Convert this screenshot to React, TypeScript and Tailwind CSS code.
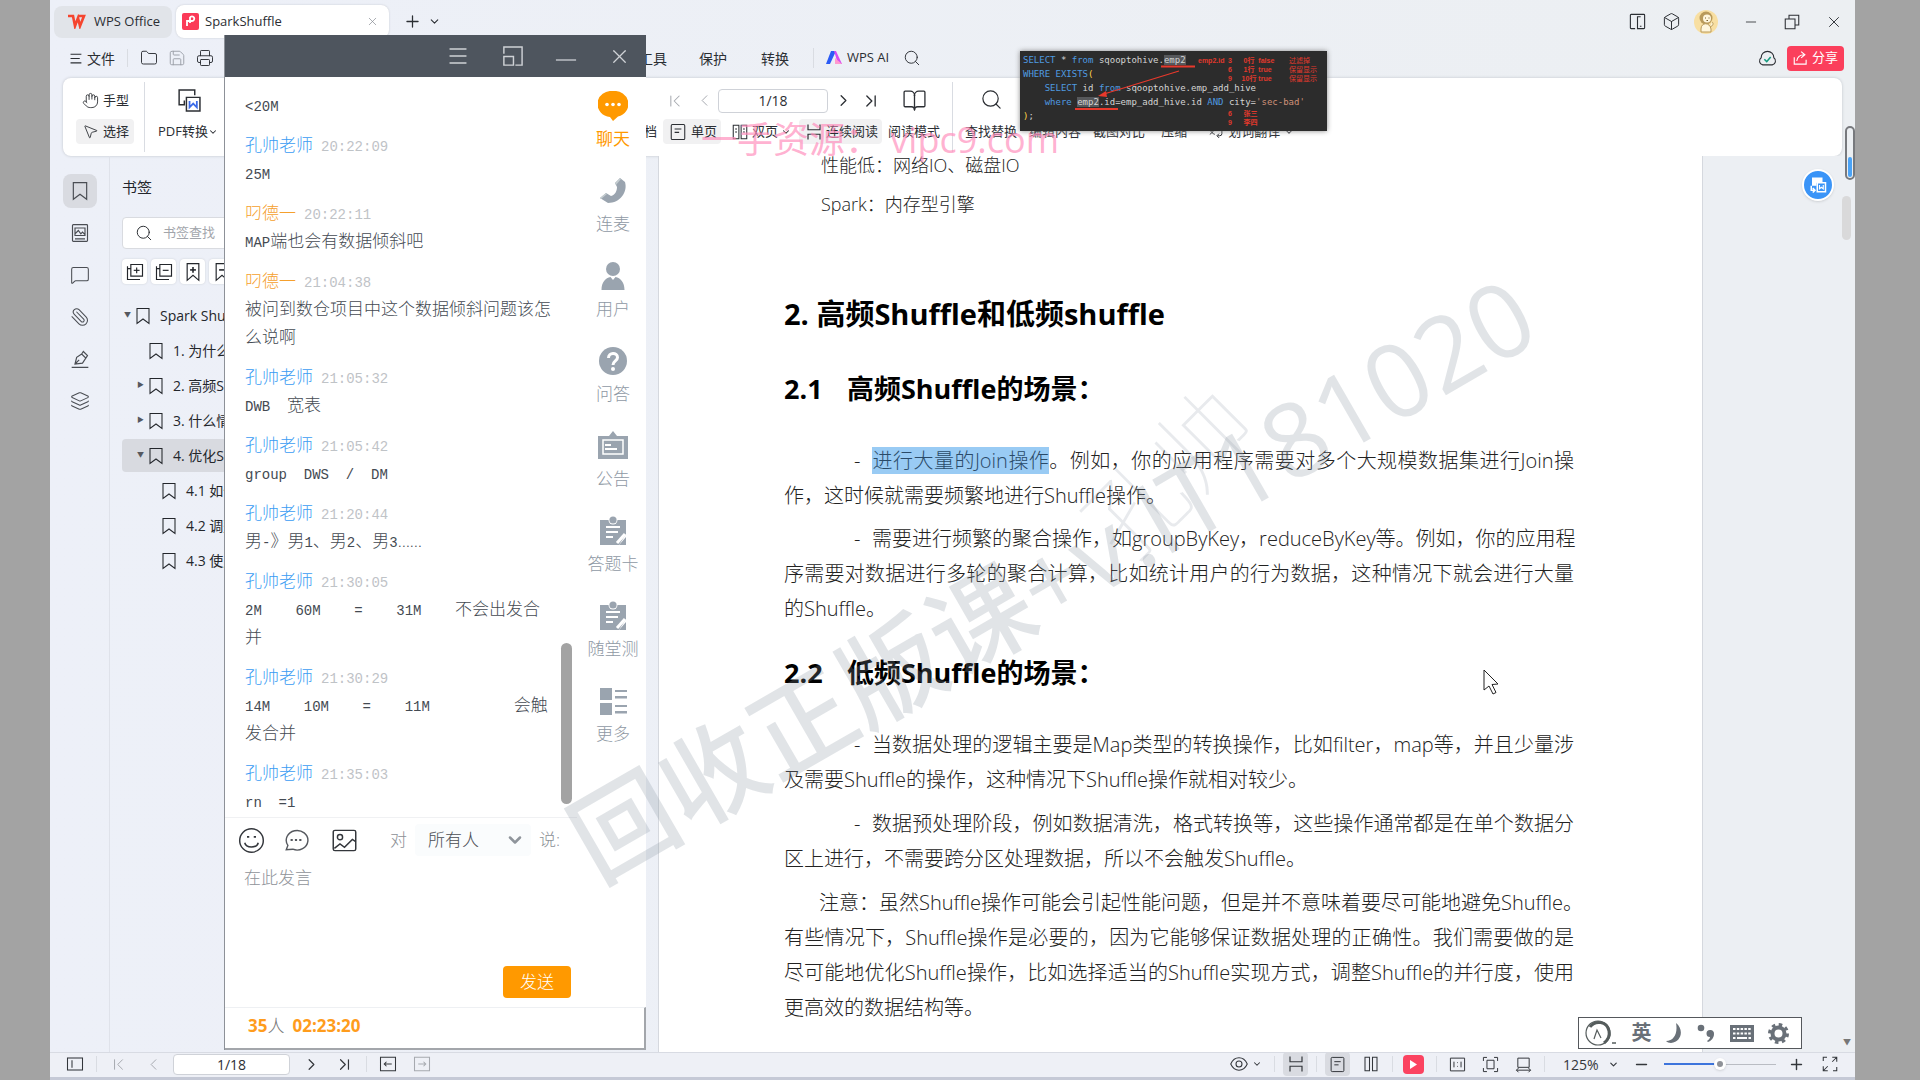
import React from 'react';
import type { ReactNode } from 'react';
import {
  Bookmark,
  Box,
  BookOpen,
  ChevronDown,
  ChevronFirst,
  ChevronLast,
  ChevronLeft,
  ChevronRight,
  Folder,
  Hand,
  Layers,
  Menu,
  MessageSquare,
  Minus,
  MousePointer2,
  Paperclip,
  Plus,
  Printer,
  Save,
  Search,
  X,
} from 'lucide-react';

const THIN = 1.25;

function Svg({ size = 20, className = '', children, sw = 1.4 }: { size?: number; className?: string; children: ReactNode; sw?: number }) {
  return (
    <svg width={size} height={size} viewBox="0 0 24 24" fill="none" stroke="currentColor" strokeWidth={sw} className={'shrink-0 ' + className}>
      {children}
    </svg>
  );
}

function Divider({ className = '' }: { className?: string }) {
  return <span className={'w-px shrink-0 bg-[#d9dce2] ' + className} />;
}

/* ---------- icons ---------- */

const SinglePage = ({ size = 19 }) => (
  <Svg size={size}>
    <rect x="3" y="2" width="18" height="20" rx="1.5" />
    <path d="M7.5 8h9M7.5 12.5h6" />
  </Svg>
);
const DoublePage = ({ size = 19 }) => (
  <Svg size={size}>
    <path d="M3 3h7.5v18H3zM13.5 3H21v18h-7.500zM5.500 8H8M5.500 12H8M16 8h2.500M16 12h2.500" />
  </Svg>
);
const Continuous = ({ size = 19 }) => (
  <Svg size={size} sw={1.6}>
    <path d="M4 2v7h16V2M4 22v-7h16v7" />
  </Svg>
);
const Clipboard = () => (
  <svg width="30" height="30" viewBox="0 0 30 30" fill="#9aa4af">
    <path d="M2 4h26v14l-7 11H2z" />
    <circle cx="15" cy="4" r="4.500" fill="#fff" />
    <circle cx="15" cy="4" r="3.600" />
    <path d="M28 21v8h-7z" />
    <path d="M8 11h14M8 16h12M8 21h7" stroke="#fff" strokeWidth="1.800" />
    <path d="M19 27l8-9" stroke="#fff" strokeWidth="3" />
  </svg>
);

const railIcons: { label: string; icon: ReactNode; active?: boolean }[] = [
  {
    label: '聊天',
    active: true,
    icon: (
      <svg width="30" height="30" viewBox="0 0 30 30">
        <path d="M15 0a14 13 0 0 1 5 25.500L15 30l-3-4A14 13 0 0 1 15 0z" fill="#ff9900" />
        <g fill="#fff">
          <circle cx="9" cy="13.500" r="1.800" />
          <circle cx="15" cy="13.500" r="1.800" />
          <circle cx="21" cy="13.500" r="1.800" />
        </g>
      </svg>
    ),
  },
  {
    label: '连麦',
    icon: (
      <svg width="30" height="30" viewBox="0 0 30 30">
        <path d="M22 2l5 4c3 10-5 21-17 21l-8-5 6-5 5 3c4-1 6-5 6-9l-2-4z" fill="#9aa4af" />
        <path d="M22 2l-5 5 1 2 5-6zM2 22l6-5 1 1-6 5z" fill="#c4cdd0" />
      </svg>
    ),
  },
  {
    label: '用户',
    icon: (
      <svg width="30" height="30" viewBox="0 0 30 30" fill="#9aa4af">
        <circle cx="15" cy="8" r="7" />
        <path d="M3.500 29c0-8 4-12 9-13l2.500 3 2.500-3c5 1 9 5 9 13z" />
      </svg>
    ),
  },
  {
    label: '问答',
    icon: (
      <svg width="30" height="30" viewBox="0 0 30 30" fill="none">
        <circle cx="15" cy="15" r="14" fill="#9aa4af" />
        <path d="M10.500 12c0-6 9-6 9-.5 0 3.500-4.500 3.500-4.500 7.500" stroke="#fff" strokeWidth="3" />
        <circle cx="15" cy="23" r="2" fill="#fff" />
      </svg>
    ),
  },
  {
    label: '公告',
    icon: (
      <svg width="32" height="30" viewBox="0 0 32 30" fill="none">
        <path d="M1 5h11l4-5 4 5h11v23H1z" fill="#9aa4af" />
        <path d="M6 9h20v14H6z" stroke="#fff" strokeWidth="1.500" />
        <path d="M8 14h6M8 18h12" stroke="#fff" strokeWidth="1.800" />
      </svg>
    ),
  },
  { label: '答题卡', icon: <Clipboard /> },
  { label: '随堂测', icon: <Clipboard /> },
  {
    label: '更多',
    icon: (
      <svg width="30" height="30" viewBox="0 0 30 30" fill="#9aa4af">
        <rect x="2" y="2" width="12" height="12" />
        <rect x="2" y="17" width="12" height="12" />
        <path d="M17 4h12v2H17zM17 10h12v2.500H17zM17 19h12v2H17zM17 25h12v2.500H17z" />
      </svg>
    ),
  },
];

/* ---------- window chrome ---------- */

function TitleBar() {
  return (
    <header className="flex h-10 shrink-0 items-center pt-[3px] pl-1 text-[13px] text-[#2b2e33]">
      <button className="flex h-8 w-[118px] items-center gap-2 rounded-lg bg-[#e1e4e9] pl-3.5">
        <svg width="18" height="15" viewBox="0 0 18 15" fill="none" stroke="#f5452f" strokeWidth="2.600">
          <path d="M0 2h5l2 10 3-8 2 8 4-10h-6" />
        </svg>
        WPS Office
      </button>
      <div className="ml-1 flex h-[33px] w-[213px] items-center rounded-lg bg-white pr-2.5 pl-1.5 shadow-[0_0_2px_#c3c6cc]">
        <svg width="17" height="17" viewBox="0 0 17 17" fill="none">
          <rect width="17" height="17" rx="2" fill="#fb3a58" />
          <path d="M5 13V8h5a2.300 2.300 0 1 0-2-3.500V10" stroke="#fff" strokeWidth="1.800" />
        </svg>
        <span className="ml-1.5 flex-1">SparkShuffle</span>
        <button aria-label="关闭标签">
          <X size={13} strokeWidth={THIN} className="text-[#83878e]" />
        </button>
      </div>
      <button aria-label="新建" className="ml-3.5">
        <Plus size={19} strokeWidth={1.600} />
      </button>
      <button aria-label="标签列表" className="ml-1.5">
        <ChevronDown size={13} strokeWidth={2} />
      </button>
      <div className="ml-auto flex items-center pr-3">
        <Svg size={19}>
          <path d="M9 21H4a1 1 0 0 1-1-1V4a1 1 0 0 1 1-1h16a1 1 0 0 1 1 1v16a1 1 0 0 1-1 1h-8V6h4M15 18h2" />
        </Svg>
        <Box size={19} strokeWidth={THIN} className="ml-[15px]" />
        <svg width="26" height="26" viewBox="0 0 26 26" className="ml-3">
          <circle cx="13" cy="13" r="12" fill="#f8dfa2" />
          <circle cx="13" cy="9" r="6.500" fill="#b99a5a" />
          <circle cx="14" cy="9.500" r="4" fill="#fff6dc" />
          <path d="M12 9h1M15.500 9h1M13.500 11.500h1.500" stroke="#7a5f2c" />
          <path d="M8 20c0-7 9-7 10 0v3H8zM17 18c3-1 4-4 2-5" fill="#fff6dc" stroke="#b99a5a" />
        </svg>
        <button aria-label="最小化" className="ml-6">
          <Minus size={16} strokeWidth={THIN} />
        </button>
        <button aria-label="还原" className="ml-6">
          <Svg size={18}>
            <path d="M3 8h13v13H3zM8 8V3h13v13h-5" />
          </Svg>
        </button>
        <button aria-label="关闭" className="ml-6">
          <X size={18} strokeWidth={THIN} />
        </button>
      </div>
    </header>
  );
}

function MenuBar() {
  return (
    <nav className="flex h-9 shrink-0 items-center pr-[11px] pl-5 text-[14px] text-[#2b2e33]">
      <button className="flex items-center gap-1">
        <Svg size={13} sw={2}>
          <path d="M1 4h20M1 12h17M1 20h20" />
        </Svg>
        文件
      </button>
      <Divider className="ml-3 h-[18px]" />
      <Folder size={18} strokeWidth={THIN} className="ml-3" />
      <Save size={18} strokeWidth={THIN} className="ml-[10px] text-[#9a9ea6]" />
      <Printer size={18} strokeWidth={THIN} className="ml-[10px]" />
      <div className="ml-[425px] flex items-center">
        <button>工具</button>
        <button className="ml-8">保护</button>
        <button className="ml-[34px]">转换</button>
        <Divider className="ml-6 h-5" />
        <button className="ml-3 flex items-center gap-1 text-[13px]">
          <svg width="17" height="14" viewBox="0 0 17 14">
            <path d="M5 0h5L4 13H0z" fill="#2b5bf5" />
            <path d="M8 0h2l6 13h-4z" fill="#d84bf0" />
            <path d="M9 7l7 6h-7z" fill="#ff9ad0" />
          </svg>
          WPS AI
        </button>
        <Search size={18} strokeWidth={THIN} className="ml-3.5" />
      </div>
      <Svg size={19} className="ml-auto">
        <path d="M6 20a5 5 0 0 1-2-9 8 8 0 0 1 16 0 5 5 0 0 1-2 9z" />
        <path d="M8 13l3 3 5-6" stroke="#159a7e" strokeWidth="2" />
      </Svg>
      <button className="ml-2.5 flex h-[25px] items-center gap-1 rounded bg-[#fb3f5c] px-1.5 text-[13px] text-white">
        <Svg size={15} sw={1.800}>
          <path d="M2 10v11h19v-7M6 16c1-7 5-10 12-10M13 1l6 5-6 5" />
        </Svg>
        分享
      </button>
    </nav>
  );
}

function PageBox({ id, className }: { id: string; className: string }) {
  return (
    <>
      <label htmlFor={id} className="sr-only">
        页码
      </label>
      <input id={id} defaultValue="1/18" className={'rounded border border-[#cfd2d8] bg-white text-center text-[14px] text-[#2b2e33] ' + className} />
    </>
  );
}

function Ribbon() {
  return (
    <section className="mx-[13px] flex h-[78px] shrink-0 rounded-lg bg-white text-[13px] text-[#2b2e33] shadow-[0_0_3px_#bfc3ca]">
      <div className="mt-2.5 ml-[13px] flex w-[58px] flex-col gap-1.5">
        <button className="flex h-[25px] items-center gap-1 pl-1.5">
          <Hand size={17} strokeWidth={THIN} />
          手型
        </button>
        <button className="flex h-[25px] items-center gap-1 rounded bg-[#f1f1f2] pl-1.5">
          <MousePointer2 size={17} strokeWidth={THIN} />
          选择
        </button>
      </div>
      <Divider className="mt-1 ml-2.5 h-[70px]" />
      <button className="mt-2.5 ml-3 flex h-[56px] w-[62px] flex-col items-center justify-between whitespace-nowrap">
        <Svg size={25}>
          <path d="M8 16H3V2h15v5M8 12v4H5" />
          <path d="M10 9h13v13H10z" />
          <path d="M13 12.500v6l3.500-3.500 3.500 3.500v-6" stroke="#3b6be8" strokeWidth="1.700" />
        </Svg>
        <span className="flex h-[25px] items-center">
          PDF转换
          <ChevronDown size={10} strokeWidth={2.500} />
        </span>
      </button>
      <div className="mt-2.5 ml-[412px] flex flex-col gap-1.5">
        <div className="flex h-[25px] items-center pl-[34px]">
          <ChevronFirst size={20} strokeWidth={THIN} className="text-[#a6a9af]" />
          <ChevronLeft size={19} strokeWidth={THIN} className="ml-2.5 text-[#a6a9af]" />
          <PageBox id="ribbon-page" className="mr-1.5 ml-1 h-6 w-[110px]" />
          <ChevronRight size={19} strokeWidth={1.600} />
          <ChevronLast size={20} strokeWidth={1.600} className="ml-2" />
        </div>
        <div className="flex h-[25px] items-center whitespace-nowrap">
          <span>文档</span>
          <button className="ml-1.5 flex h-[25px] items-center gap-1 rounded bg-[#f1f1f2] pr-1 pl-1.5">
            <SinglePage size={18} />
            单页
          </button>
          <button className="ml-2.5 flex items-center gap-[3px]">
            <DoublePage size={18} />
            双页
            <ChevronDown size={10} strokeWidth={2.500} />
          </button>
          <button className="ml-2 flex h-[25px] items-center gap-[3px] rounded bg-[#f1f1f2] pr-1 pl-1.5">
            <Continuous size={18} />
            连续阅读
          </button>
        </div>
      </div>
      <button className="mt-2.5 ml-1.5 flex h-[56px] flex-col items-center justify-between whitespace-nowrap">
        <BookOpen size={25} strokeWidth={THIN} />
        <span className="h-[25px] leading-[25px]">阅读模式</span>
      </button>
      <Divider className="mt-1 ml-3 h-[70px]" />
      <button className="mt-2.5 ml-3 flex h-[56px] flex-col items-center justify-between whitespace-nowrap">
        <Search size={23} strokeWidth={THIN} />
        <span className="h-[25px] leading-[25px]">查找替换</span>
      </button>
      <div className="mt-[41px] ml-3 flex h-[25px] items-center gap-3 whitespace-nowrap">
        <button>编辑内容</button>
        <button>截图对比</button>
        <button className="ml-1">压缩</button>
        <button className="ml-2 flex items-center gap-1">
          <Svg size={17}>
            <path d="M2 6h10M7 3v3M4 16c4-2 6-6 6-10M4 9c2 4 4 6 7 7M21 10v5a3 3 0 0 1-3 3h-3M17 15l-3 3 3 3" />
          </Svg>
          划词翻译
          <ChevronDown size={10} strokeWidth={2.500} />
        </button>
      </div>
    </section>
  );
}

/* ---------- left side ---------- */

function SideStrip() {
  const items: [string, ReactNode][] = [
    [
      '书签',
      <Svg size={20}>
        <path d="M4 2h16v20l-8-6-8 6z" />
      </Svg>,
    ],
    [
      '缩略图',
      <Svg size={20}>
        <rect x="3" y="2" width="18" height="20" rx="1" />
        <path d="M6 6h12v9H6zM6 13l4-4 3 4 2-2 3 3M6 19h12" />
      </Svg>,
    ],
    ['批注', <MessageSquare size={20} strokeWidth={THIN} />],
    ['附件', <Paperclip size={20} strokeWidth={THIN} className="-scale-x-100" />],
    [
      '签名',
      <Svg size={20}>
        <path d="M2 22h20M6 18l2-8 6-4 5 5-4 6zM6 18l5-5M14 6l2-3 5 5-2 3" />
      </Svg>,
    ],
    ['图层', <Layers size={20} strokeWidth={THIN} />],
  ];
  return (
    <aside className="flex w-[60px] shrink-0 flex-col items-center gap-2 border-r border-[#dfe2ea] pt-[18px] text-[#4a4d53]">
      {items.map(([label, icon], i) => (
        <button key={label} aria-label={label} className={i === 0 ? 'grid h-[34px] w-[34px] place-items-center rounded-lg bg-[#d9dbe1]' : 'grid h-[34px] w-[34px] place-items-center'}>
          {icon}
        </button>
      ))}
    </aside>
  );
}

const tree = [
  { level: 0, arrow: 'down', text: 'Spark Shuffle' },
  { level: 1, arrow: '', text: '1. 为什么需要Shuffle' },
  { level: 1, arrow: 'right', text: '2. 高频Shuffle和低频shuffle' },
  { level: 1, arrow: 'right', text: '3. 什么情况' },
  { level: 1, arrow: 'down', text: '4. 优化Shuffle', active: true },
  { level: 2, arrow: '', text: '4.1 如何优化' },
  { level: 2, arrow: '', text: '4.2 调整并行度' },
  { level: 2, arrow: '', text: '4.3 使用缓存' },
];
const indent = ['pl-0.5', 'pl-[15px]', 'pl-7'];

function BookmarkPanel() {
  return (
    <section className="w-[548px] shrink-0 pt-5 pr-14 pl-3 text-[14px] text-[#23262b]">
      <h2 className="text-[15px] leading-[22px]">书签</h2>
      <div className="mt-[19px] flex h-8 items-center gap-2.5 rounded border border-[#d9dbe0] bg-white pl-3">
        <Search size={18} strokeWidth={THIN} />
        <label htmlFor="bm-search" className="sr-only">
          书签查找
        </label>
        <input id="bm-search" placeholder="书签查找" className="w-40 text-[13px] placeholder:text-[#a2a5ab]" />
      </div>
      <div className="mt-2.5 flex gap-1">
        {[0, 1, 2, 3].map((n) => (
          <button key={n} aria-label={['展开', '折叠', '添加书签', '删除书签'][n]} className="grid size-[25px] place-items-center rounded bg-white shadow-[0_0_2px_#c9ccd2]">
            <Svg size={20}>
              {n < 2 ? <path d="M7 3h14v14H7zM3 5v16h15M3 8h4" /> : <path d="M5 2h14v20l-7-6-7 6z" />}
              {n < 2 ? <path d="M10.500 10h7" /> : <path d="M8.500 9.500h7" strokeWidth="1.900" />}
              {n === 0 && <path d="M14 6.500v7" />}
              {n === 2 && <path d="M12 6v7" strokeWidth="1.900" />}
            </Svg>
          </button>
        ))}
      </div>
      <ul className="mt-3.5 whitespace-nowrap">
        {tree.map((t) => (
          <li key={t.text} className="h-[35px] py-px">
            <button className={'flex h-[33px] w-full items-center rounded text-left ' + indent[t.level] + (t.active ? ' bg-[#d8dae0]' : '')}>
              <span className="w-2.5 text-[7px] text-[#55585f]">{t.arrow === 'down' ? '▼' : t.arrow === 'right' ? '▶' : ''}</span>
              <Svg size={18} className="mr-2">
                <path d="M4 2h16v20l-8-6-8 6z" />
              </Svg>
              {t.text}
            </button>
          </li>
        ))}
      </ul>
    </section>
  );
}

/* ---------- document ---------- */

function Line({ children, last, lead }: { children: ReactNode; last?: boolean; lead?: 'dash' | 'note' }) {
  return (
    <span
      className={
        'block whitespace-nowrap ' + (last ? '' : '[text-align-last:justify] ') + (lead === 'dash' ? 'pl-[70px]' : lead === 'note' ? 'pl-[35px]' : '')
      }
    >
      {lead === 'dash' && <span className="inline-block w-[18px] [text-align-last:left]">-</span>}
      {children}
    </span>
  );
}

function DocumentPage() {
  return (
    <div className="relative flex min-w-0 flex-1 bg-[#eceff3]">
      <article className="mr-[152px] min-w-0 flex-1 overflow-hidden border-r border-l border-[#d5d8de] bg-white pr-[128px] pl-[125px] text-[20px] leading-[35px] font-light text-[#222]">
        <div className="-mt-2 pl-[37px] text-[18px]">
          <p>性能低：网络IO、磁盘IO</p>
          <p className="mt-1">Spark：内存型引擎</p>
        </div>
        <h1 className="mt-[72px] text-[29px] leading-10 font-bold text-black">2. 高频Shuffle和低频shuffle</h1>
        <h2 className="mt-[35px] text-[27px] leading-10 font-bold text-black">
          <span className="inline-block w-[63px]">2.1</span>高频Shuffle的场景：
        </h2>
        <p className="mt-[34px]">
          <Line lead="dash">
            <mark className="bg-[#99cbf4] text-[#2a4a68]">进行大量的Join操作</mark>。例如，你的应用程序需要对多个大规模数据集进行Join操
          </Line>
          <Line last>作，这时候就需要频繁地进行Shuffle操作。</Line>
        </p>
        <p className="mt-2">
          <Line lead="dash">需要进行频繁的聚合操作，如groupByKey，reduceByKey等。例如，你的应用程</Line>
          <Line>序需要对数据进行多轮的聚合计算，比如统计用户的行为数据，这种情况下就会进行大量</Line>
          <Line last>的Shuffle。</Line>
        </p>
        <h2 className="mt-[27px] text-[27px] leading-10 font-bold text-black">
          <span className="inline-block w-[63px]">2.2</span>低频Shuffle的场景：
        </h2>
        <p className="mt-[34px]">
          <Line lead="dash">当数据处理的逻辑主要是Map类型的转换操作，比如filter，map等，并且少量涉</Line>
          <Line last>及需要Shuffle的操作，这种情况下Shuffle操作就相对较少。</Line>
        </p>
        <p className="mt-[9px]">
          <Line lead="dash">数据预处理阶段，例如数据清洗，格式转换等，这些操作通常都是在单个数据分</Line>
          <Line last>区上进行，不需要跨分区处理数据，所以不会触发Shuffle。</Line>
        </p>
        <p className="mt-[9px]">
          <Line lead="note">注意：虽然Shuffle操作可能会引起性能问题，但是并不意味着要尽可能地避免Shuffle。</Line>
          <Line>有些情况下，Shuffle操作是必要的，因为它能够保证数据处理的正确性。我们需要做的是</Line>
          <Line>尽可能地优化Shuffle操作，比如选择适当的Shuffle实现方式，调整Shuffle的并行度，使用</Line>
          <Line last>更高效的数据结构等。</Line>
        </p>
      </article>
      <button aria-label="转换为Word" className="absolute top-[13px] right-[21px] grid size-8 place-items-center rounded-full border-2 border-white bg-[#3a94f7] text-white shadow">
        <Svg size={18} sw={2}>
          <path d="M12 8V4H5v6M3 13v6h4M5 16l3 3-3 3" />
          <path d="M5 3h12v5H9v4H5z" fill="currentColor" />
          <path d="M11 9h11v12H11z" fill="#3a94f7" />
          <path d="M14 12v5l2.500-2 2.500 2v-5" strokeWidth="1.500" />
        </Svg>
      </button>
      <span className="absolute top-10 right-1 h-11 w-[9px] rounded-full bg-[#d9d9da]" />
      <span className="absolute right-1 bottom-1 text-[8px] text-[#777]">▼</span>
    </div>
  );
}

function StatusBar() {
  return (
    <footer className="flex h-[25px] shrink-0 items-center border-t border-[#d8dbe3] bg-[#eef0f6] px-4 pb-0.5 text-[14px] text-[#33363b]">
      <Svg size={18}>
        <rect x="2" y="4" width="20" height="16" />
        <path d="M8 7v10" />
      </Svg>
      <Divider className="ml-3 h-4" />
      <ChevronFirst size={19} strokeWidth={THIN} className="ml-3 text-[#a6a9af]" />
      <ChevronLeft size={19} strokeWidth={THIN} className="ml-4 text-[#a6a9af]" />
      <PageBox id="status-page" className="mx-2.5 h-[21px] w-[117px]" />
      <ChevronRight size={19} strokeWidth={1.500} className="ml-0.5" />
      <ChevronLast size={19} strokeWidth={1.500} className="ml-3.5" />
      <Divider className="ml-3 h-4" />
      <Svg size={18} className="ml-3">
        <path d="M2 3h20v18H2zM17 12H7M10 9l-3 3 3 3" />
      </Svg>
      <Svg size={18} className="ml-4 text-[#a6a9af]">
        <path d="M2 3h20v18H2zM7 12h10M14 9l3 3-3 3" />
      </Svg>
      <div className="ml-auto flex items-center">
        <Svg size={18}>
          <path d="M1 12c5-11 17-11 22 0-5 11-17 11-22 0z" />
          <circle cx="12" cy="12" r="4" />
        </Svg>
        <ChevronDown size={10} strokeWidth={2.500} className="ml-1" />
        <Divider className="ml-3 h-4" />
        <button aria-label="连续" className="ml-2 grid h-6 w-[25px] place-items-center rounded bg-[#d9dbe1]">
          <Continuous size={18} />
        </button>
        <Divider className="ml-2 h-4" />
        <button aria-label="单页" className="ml-2 grid h-6 w-[25px] place-items-center rounded bg-[#d9dbe1]">
          <SinglePage size={17} />
        </button>
        <Svg size={18} className="ml-3">
          <path d="M4 3h6v18H4zM14 3h6v18h-6z" />
        </Svg>
        <Divider className="ml-3 h-4" />
        <button aria-label="播放" className="ml-2.5 grid h-[19px] w-[21px] place-items-center rounded bg-[#fb4360]">
          <svg width="7" height="9" viewBox="0 0 7 9" fill="#fff">
            <path d="M0 0l7 4.500L0 9z" />
          </svg>
        </button>
        <Divider className="ml-3 h-4" />
        <Svg size={17} className="ml-3">
          <path d="M2 3h20v18H2zM7 8v8M17 8v8M12 9v1M12 14v1" />
        </Svg>
        <Svg size={17} className="ml-4">
          <path d="M2 7V2h5M17 2h5v5M22 17v5h-5M7 22H2v-5M7 6h10v12H7z" />
        </Svg>
        <Svg size={17} className="ml-4">
          <path d="M4 3h16v13H4zM2 20h20M5 17l-3 3 3 3M19 17l3 3-3 3" />
        </Svg>
        <Divider className="ml-3 h-4" />
        <span className="ml-[18px] w-[35px]">125%</span>
        <ChevronDown size={11} strokeWidth={2.500} className="ml-2.5" />
        <Minus size={17} strokeWidth={2} className="ml-3.5" />
        <span className="relative ml-3.5 flex h-4 w-[112px] items-center">
          <span className="h-0.5 w-1/2 bg-[#3d74dc]" />
          <span className="h-px w-1/2 bg-[#b9bcc3]" />
          <span className="absolute left-[50px] grid size-3 place-items-center rounded-full bg-white shadow">
            <span className="size-1.5 rounded-full bg-[#8f9298]" />
          </span>
        </span>
        <Plus size={17} strokeWidth={2} className="ml-3" />
        <Svg size={18} className="ml-4">
          <path d="M15 3h6v6M21 3l-6 6M9 21H3v-6M3 21l6-6M3 8V3h5M21 16v5h-5" />
        </Svg>
      </div>
    </footer>
  );
}

/* ---------- chat window ---------- */

const teacher = '孔帅老师';
const student = '叼德一';
const messages: { who: string; time: string; lines: string[] }[] = [
  { who: teacher, time: '20:22:09', lines: ['25M'] },
  { who: student, time: '20:22:11', lines: ['MAP端也会有数据倾斜吧'] },
  { who: student, time: '21:04:38', lines: ['被问到数仓项目中这个数据倾斜问题该怎', '么说啊'] },
  { who: teacher, time: '21:05:32', lines: ['DWB  宽表'] },
  { who: teacher, time: '21:05:42', lines: ['group  DWS  /  DM'] },
  { who: teacher, time: '21:20:44', lines: ['男-》男1、男2、男3……'] },
  { who: teacher, time: '21:30:05', lines: ['2M    60M    =    31M    不会出发合', '并'] },
  { who: teacher, time: '21:30:29', lines: ['14M    10M    =    11M          会触', '发合并'] },
  { who: teacher, time: '21:35:03', lines: ['rn  =1'] },
];

function Mixed({ text }: { text: string }) {
  return (
    <p className="h-7 whitespace-pre">
      {text.split(/([\x20-\x7e]+)/).map((part, i) =>
        i % 2 ? (
          <span key={i} className="font-['Liberation_Mono',monospace] text-[14px] leading-none">
            {part}
          </span>
        ) : (
          part
        ),
      )}
    </p>
  );
}

function ChatWindow() {
  return (
    <div className="absolute top-[35px] left-[174px] z-10 flex h-[1015px] w-[422px] flex-col border-l border-[#8d9198] bg-white">
      <div className="flex h-[42px] shrink-0 items-center justify-end gap-[31px] bg-[#4e555e] pr-[15px] text-[#cfd2d6]">
        <Menu size={24} strokeWidth={1.300} />
        <Svg size={23} sw={1.500}>
          <path d="M3 9V2h19v19h-7M3 12h10v9H3z" />
        </Svg>
        <button aria-label="最小化聊天" className="pt-2">
          <Svg size={22}>
            <path d="M1 12h22" />
          </Svg>
        </button>
        <button aria-label="关闭聊天">
          <X size={23} strokeWidth={1.300} />
        </button>
      </div>
      <div className="flex min-h-0 flex-1">
        <div className="flex w-[352px] flex-col">
          <div className="relative h-[741px] overflow-hidden border-b border-[#f0f1f3] pt-[14px] pl-5 text-[17px] leading-7 font-light text-[#444a52]">
            <Mixed text="<20M" />
            {messages.map((m) => (
              <div key={m.time} className="mt-3">
                <p className="h-7">
                  <span className={m.who === teacher ? 'text-[#3b9cf3]' : 'text-[#f5a02d]'}>{m.who}</span>
                  <span className="ml-2 font-['Liberation_Mono',monospace] text-[14px] leading-none text-[#bfc3c7]">{m.time}</span>
                </p>
                {m.lines.map((l) => (
                  <Mixed key={l} text={l} />
                ))}
              </div>
            ))}
            <span className="absolute right-[5px] bottom-[13px] h-[161px] w-[11px] rounded-full bg-[#a3a3a3]" />
          </div>
          <div className="flex h-11 items-center pl-[13px] text-[17px] font-light text-[#8c9096]">
            <button aria-label="表情" className="text-[#33363b]">
              <Svg size={27} sw={1.300}>
                <circle cx="12" cy="12" r="10.500" />
                <path d="M6 14c1 5 11 5 12 0" />
                <path d="M9 8v1.500M15 8v1.500" strokeWidth="2" />
              </Svg>
            </button>
            <button aria-label="快捷语" className="ml-[18px] text-[#55585e]">
              <Svg size={26} sw={1.300}>
                <path d="M3 21l1.500-4A10 9 0 1 1 9 20.500z" />
                <path d="M7 12h2M11 12h2M15 12h2" strokeWidth="2" />
              </Svg>
            </button>
            <button aria-label="图片" className="ml-[22px] text-[#33363b]">
              <Svg size={27} sw={1.300}>
                <rect x="2" y="3" width="20" height="18" rx="1.500" />
                <circle cx="8" cy="9" r="2.300" />
                <path d="M3 19l5-4 4 3 7-7 3 2" />
              </Svg>
            </button>
            <label htmlFor="chat-to" className="ml-8">
              对
            </label>
            <span className="relative ml-2 flex items-center">
              <select id="chat-to" className="h-8 w-[116px] appearance-none rounded bg-[#fafcfd] pl-[13px] text-[#4a4d53]">
                <option>所有人</option>
              </select>
              <ChevronDown size={20} strokeWidth={3} className="pointer-events-none absolute right-1.5 text-[#8f949b]" />
            </span>
            <span className="ml-2 whitespace-nowrap">说:</span>
          </div>
          <textarea aria-label="发言内容" placeholder="在此发言" className="h-[104px] resize-none pt-[3px] pl-[19px] text-[17px] font-light placeholder:text-[#8f9399]" />
          <button className="mr-1.5 ml-auto h-8 w-[68px] rounded bg-[#ff9900] text-[17px] font-light text-white">发送</button>
        </div>
        <nav className="flex flex-1 flex-col items-center gap-[7px] pt-[14px] pl-[3px]">
          {railIcons.map((r) => (
            <button key={r.label} className="flex h-[78px] flex-col items-center">
              {r.icon}
              <span className={r.active ? 'mt-1.5 text-[17px] leading-6 text-[#ff9900]' : 'mt-1.5 text-[17px] leading-6 font-light text-[#8f99a4]'}>{r.label}</span>
            </button>
          ))}
        </nav>
      </div>
      <div className="flex h-[43px] shrink-0 items-center gap-2 border-t border-r-2 border-b-2 border-t-[#eef0f3] border-r-[#a3a6ab] border-b-[#a3a6ab] pr-2 pb-1 pl-[23px] text-[17px] font-bold text-[#ff9c1c]">
        <span>
          35<span className="font-light text-[#777]">人</span>
        </span>
        <span>02:23:20</span>
      </div>
    </div>
  );
}

/* ---------- floating pieces ---------- */

const K = ({ children }: { children: ReactNode }) => <span className="text-[#4f9be0]">{children}</span>;
const H = ({ children }: { children: ReactNode }) => <span className="bg-[#56585b]">{children}</span>;

function QueryNote() {
  return (
    <div className="absolute top-[51px] left-[970px] z-10 h-20 w-[307px] overflow-hidden bg-[#2c2c2c] pt-[2px] pl-[3px] shadow-[0_0_5px_#888]">
      <pre className="font-['DejaVu_Sans_Mono',monospace] text-[9px] leading-[14px] text-[#d4d4d4]">
        <K>SELECT</K> * <K>from</K> sqooptohive.<H>emp2</H>
        {'\n'}
        <K>WHERE EXISTS</K>
        <span className="text-[#ffd54a]">(</span>
        {'\n    '}
        <K>SELECT</K> id <K>from</K> sqooptohive.emp_add_hive
        {'\n    '}
        <K>where</K> <H>emp2</H>.id=emp_add_hive.id <K>AND</K> city=<span className="text-[#ce9178]">'sec-bad'</span>
        {'\n'}
        <span className="text-[#ffd54a]">)</span>;
      </pre>
      <pre className="absolute top-[5px] left-[208px] font-['Liberation_Sans','Noto_Sans_CJK_SC',sans-serif] text-[7px] leading-[9px] font-bold text-[#e0392c]">
        {'3      0行  false\n6      1行  true\n9     10行 true'}
      </pre>
      <pre className="absolute top-[5px] left-[269px] font-['Noto_Sans_CJK_SC',sans-serif] text-[7px] leading-[9px] text-[#e0392c]">{'过滤掉\n保留显示\n保留显示'}</pre>
      <span className="absolute top-[5px] left-[178px] font-['Liberation_Sans',sans-serif] text-[7px] leading-[9px] font-bold text-[#e0392c]">emp2.id</span>
      <pre className="absolute top-[58px] left-[208px] font-['Liberation_Sans','Noto_Sans_CJK_SC',sans-serif] text-[7px] leading-[9px] font-bold text-[#e0392c]">
        {'6      张三\n9      李四'}
      </pre>
      <svg className="absolute inset-0" width="307" height="80" viewBox="0 0 307 80" fill="none" stroke="#e8392c" strokeWidth="1.800">
        <path d="M141 15.500h34M55 58h43" />
        <path d="M159 20L84 43" strokeWidth="1.200" />
        <path d="M78 45l8-5 1 6z" fill="#e8392c" stroke="none" />
      </svg>
    </div>
  );
}

function InputMethodBar() {
  return (
    <div className="absolute right-[53px] bottom-[28px] z-10 flex h-8 w-56 items-center justify-between border border-[#55585c] bg-white pr-3 pl-1.5 text-[#697078]">
      <svg width="32" height="28" viewBox="0 0 32 28" fill="none" stroke="#555c5c">
        <circle cx="13" cy="14" r="12" strokeWidth="1.200" />
        <path d="M5 8c5-7 17-6 19 4 1 5-1 9-5 12" strokeWidth="3" />
        <path d="M9 20l3-9 4 8" strokeWidth="1.200" />
        <path d="M27 24h4" strokeWidth="1.500" />
      </svg>
      <span className="text-[20px] leading-7 font-bold">英</span>
      <svg width="17" height="22" viewBox="0 0 17 22" fill="currentColor">
        <path d="M10 1c8 6 6 19-5 20-2 0-4-1-5-2 8 0 12-8 10-18z" />
      </svg>
      <svg width="18" height="20" viewBox="0 0 18 20" fill="currentColor">
        <circle cx="4" cy="5" r="3.300" />
        <path d="M13 7a3.500 3.500 0 0 1 4 4c0 4-3 7-6 8l-1-1c2-1 3-3 3-4a3.500 3.500 0 0 1 0-7z" />
      </svg>
      <svg width="24" height="17" viewBox="0 0 24 17" fill="none">
        <rect width="24" height="17" fill="#697078" />
        <path d="M3 4h18M3 8.500h18" stroke="#fff" strokeWidth="2" strokeDasharray="2.500 1.300" />
        <path d="M3 13h2.500M7 13h10M18.500 13H21" stroke="#fff" strokeWidth="2" />
      </svg>
      <svg width="21" height="21" viewBox="0 0 21 21" fill="none" stroke="currentColor">
        <circle cx="10.500" cy="10.500" r="6" strokeWidth="4" />
        <circle cx="10.500" cy="10.500" r="9" strokeWidth="3" strokeDasharray="3.530 3.530" />
      </svg>
    </div>
  );
}

export default function App() {
  return (
    <div className="h-screen w-full overflow-hidden bg-[#a3a3a3] pr-[65px] pl-[50px] font-['Open_Sans','Noto_Sans_CJK_SC',sans-serif]">
      <div className="relative flex h-full flex-col border-b-[3px] border-[#c5c9d6] bg-linear-to-r from-[#edf0f8] to-[#eceff2]">
        <TitleBar />
        <MenuBar />
        <div className="h-0.5 shrink-0" />
        <Ribbon />
        <main className="flex min-h-0 flex-1">
          <SideStrip />
          <BookmarkPanel />
          <DocumentPage />
        </main>
        <StatusBar />

        <ChatWindow />
        <QueryNote />
        <InputMethodBar />

        <span className="absolute top-[126px] right-0 flex h-[54px] w-2.5 items-end rounded-full border-2 border-[#77797d] bg-[#eceff2] p-px">
          <span className="h-5 w-full rounded-full bg-[#4aa3f7]" />
        </span>
        <svg className="absolute top-[669px] left-[1433px]" width="17" height="26" viewBox="0 0 17 26">
          <path d="M1 1v20l5-4 4 8 3-1.500-4-8 6-.5z" fill="#fff" stroke="#222" />
        </svg>
        <span className="pointer-events-none absolute top-[115px] left-[651px] z-20 text-[36px] leading-[50px] whitespace-pre text-[#ff8fbd]/70">
          一手资源： vipc9.com
        </span>
        <span className="pointer-events-none absolute top-[502px] left-[441px] z-20 w-[1120px] -rotate-30 text-center text-[103px] leading-[150px] font-medium whitespace-nowrap text-[#87929f]/25">
          回收正版课+v.IT181020
        </span>
        <span className="pointer-events-none absolute top-[415px] left-[1020px] -rotate-45 font-['Noto_Sans_CJK_SC',sans-serif] text-[96px] leading-[110px] font-thin whitespace-nowrap text-[#8b96a3]/20">
          孔帅
        </span>
      </div>
    </div>
  );
}
